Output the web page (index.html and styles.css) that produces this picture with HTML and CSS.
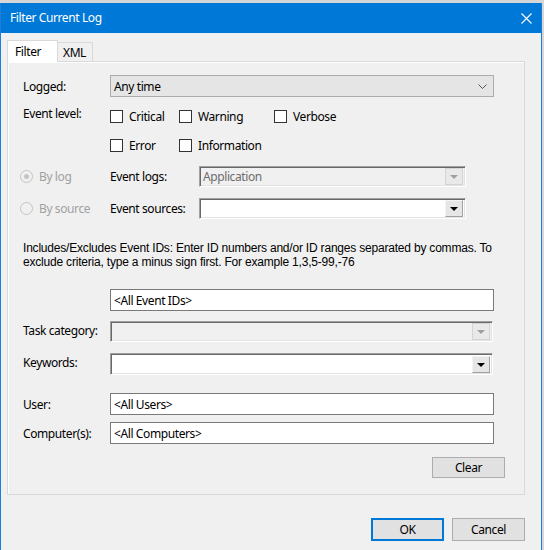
FILE: index.html
```html
<!DOCTYPE html>
<html>
<head>
    <title>Filter Current Log</title>
    <link rel="stylesheet" href="styles.css">
</head>
<body>
    <div class="window">
        <div class="titlebar">
            <span class="title">Filter Current Log</span>
            <svg class="close" width="11" height="11" viewBox="0 0 11 11">
                <path d="M0.5 0.5 L10.5 10.5 M10.5 0.5 L0.5 10.5" stroke="#fff" stroke-width="1.1" fill="none"/>
            </svg>
        </div>

        <div class="content">
            <div class="tabs">
                <div class="tab active">Filter</div>
                <div class="tab">XML</div>
            </div>

            <div class="panel">
                <div class="row row-logged">
                    <span class="lbl">Logged:</span>
                    <div class="select">
                        <span>Any time</span>
                        <svg class="chevron" width="9" height="5" viewBox="0 0 9 5">
                            <path d="M0.5 0.5 L4.5 4.5 L8.5 0.5" stroke="#555" stroke-width="1" fill="none"/>
                        </svg>
                    </div>
                </div>

                <div class="row row-check1">
                    <span class="lbl lbl-up">Event level:</span>
                    <label class="check w-critical"><span class="box"></span>Critical</label>
                    <label class="check w-warning"><span class="box"></span>Warning</label>
                    <label class="check"><span class="box"></span>Verbose</label>
                </div>
                <div class="row row-check2">
                    <span class="lbl"></span>
                    <label class="check w-critical"><span class="box"></span>Error</label>
                    <label class="check"><span class="box"></span>Information</label>
                </div>

                <div class="row row-logs">
                    <label class="radio disabled"><span class="dot checked"></span>By log</label>
                    <span class="lbl2">Event logs:</span>
                    <div class="combo combo-short disabled">
                        <span class="combo-text">Application</span>
                        <span class="drop"><span class="arrow"></span></span>
                    </div>
                </div>
                <div class="row row-sources">
                    <label class="radio disabled"><span class="dot"></span>By source</label>
                    <span class="lbl2">Event sources:</span>
                    <div class="combo combo-short">
                        <span class="combo-text"></span>
                        <span class="drop"><span class="arrow"></span></span>
                    </div>
                </div>

                <div class="note">
                    <div class="note-line">Includes/Excludes Event IDs: Enter ID numbers and/or ID ranges separated by commas. To</div>
                    <div class="note-line">exclude criteria, type a minus sign first. For example 1,3,5-99,-76</div>
                </div>

                <div class="row row-ids">
                    <span class="lbl"></span>
                    <div class="textbox">&lt;All Event IDs&gt;</div>
                </div>

                <div class="row row-task">
                    <span class="lbl lbl-up1">Task category:</span>
                    <div class="combo combo-long disabled">
                        <span class="combo-text"></span>
                        <span class="drop"><span class="arrow"></span></span>
                    </div>
                </div>
                <div class="row row-keywords">
                    <span class="lbl lbl-up1">Keywords:</span>
                    <div class="combo combo-long">
                        <span class="combo-text"></span>
                        <span class="drop"><span class="arrow"></span></span>
                    </div>
                </div>

                <div class="row row-user">
                    <span class="lbl">User:</span>
                    <div class="textbox">&lt;All Users&gt;</div>
                </div>
                <div class="row row-computer">
                    <span class="lbl">Computer(s):</span>
                    <div class="textbox">&lt;All Computers&gt;</div>
                </div>

                <div class="clear-row">
                    <button class="btn">Clear</button>
                </div>
            </div>

            <div class="actions">
                <button class="btn default">OK</button>
                <button class="btn">Cancel</button>
            </div>
        </div>
    </div>
</body>
</html>
```

FILE: styles.css
```css
* { margin: 0; padding: 0; box-sizing: border-box; }
body {
    background: #d6d6d6; font-family: "Noto Sans", Arial, sans-serif; font-size: 12px;
    letter-spacing: -0.4px; color: #000;
}

.window {
    width: 542px; height: 547px; margin-top: 3px;
    border-left: 1px solid #1a7fd8; border-right: 1px solid #1a7fd8;
    background: #f0f0f0;
}
.titlebar {
    height: 30px; background: #0078d7; color: #fff;
    display: flex; align-items: center; justify-content: space-between;
    padding: 0 9px 1px 9px;
}
.title { font-size: 12px; }
.close { margin-top: 1px; }

.content { padding: 7px 0 0 6px; }
.tabs { display: flex; align-items: flex-end; height: 21px; position: relative; z-index: 1; }
.tab {
    height: 19px; padding: 0 6px 0 5px; border: 1px solid #d9d9d9; border-bottom: none;
    background: #f0f0f0; display: flex; align-items: center; margin-left: -1px;
}
.tab:first-child { margin-left: 0; }
.tab.active { height: 22px; width: 51px; padding-left: 7px; background: #fff; margin-bottom: -1px; }

.panel {
    width: 518px; height: 434px; border: 1px solid #d9d9d9;
    background: #f0f0f0; box-shadow: inset 1px 1px 0 #fff;
    padding: 13px 0 0 15px;
}

.row { display: flex; align-items: center; }
.lbl { width: 87px; flex: none; }
.lbl2 { width: 89px; flex: none; }
.lbl-up { margin-bottom: 7px; }
.lbl-up1 { margin-bottom: 3px; }

.row-logged { height: 22px; }
.row-check1 { height: 19px; margin-top: 10px; }
.row-check2 { height: 19px; margin-top: 10px; }
.row-logs { height: 21px; margin-top: 11px; margin-left: -3px; }
.row-sources { height: 21px; margin-top: 11px; margin-left: -3px; }
.note {
    margin-top: 22px; white-space: nowrap;
    font-family: "Liberation Sans", Arial, sans-serif; letter-spacing: -0.2px;
}
.note-line { height: 14px; line-height: 14px; }
.row-ids { height: 22px; margin-top: 20px; }
.row-task { height: 21px; margin-top: 10px; }
.row-keywords { height: 22px; margin-top: 11px; }
.row-user { height: 22px; margin-top: 18px; }
.row-computer { height: 22px; margin-top: 7px; }

.select {
    width: 384px; height: 22px; background: #e5e5e5; border: 1px solid #acacac;
    display: flex; align-items: center; justify-content: space-between;
    padding: 0 6px 0 3px;
}

.check { display: flex; align-items: center; }
.w-critical { width: 69px; }
.w-warning { width: 95px; }
.box { width: 13px; height: 13px; border: 1px solid #333; background: #fff; margin-right: 6px; }

.radio { display: flex; align-items: center; width: 90px; flex: none; }
.radio.disabled { color: #a0a0a0; }
.dot {
    width: 13px; height: 13px; border-radius: 50%; border: 1px solid #c4c4c4;
    background: #f0f0f0; margin-right: 6px; position: relative;
}
.dot.checked::after {
    content: ""; position: absolute; left: 3px; top: 3px; width: 5px; height: 5px;
    border-radius: 50%; background: #c4c4c4;
}

.combo {
    height: 21px; background: #fff; display: flex; align-items: center; justify-content: space-between;
    border: 1px solid; border-color: #a0a0a0 #fff #fff #a0a0a0;
    box-shadow: inset 1px 1px 0 #696969, inset -1px -1px 0 #e3e3e3;
    padding: 2px;
}
.row-keywords .combo { height: 22px; }
.combo.disabled { background: #f0f0f0; color: #6d6d6d; }
.combo-short { width: 267px; }
.combo-long { width: 383px; }
.combo-text { padding-left: 1px; }
.drop {
    width: 18px; height: 17px; background: #e6e6e6;
    border: 1px solid; border-color: #f4f4f4 #a0a0a0 #a0a0a0 #f4f4f4;
    display: flex; align-items: center; justify-content: center;
}
.arrow {
    width: 0; height: 0; border-left: 4px solid transparent; border-right: 4px solid transparent;
    border-top: 4px solid #000; margin-top: 1px;
}
.combo.disabled .drop { border-color: #d4d4d4; background: #e9e9e9; }
.combo.disabled .arrow { border-top-color: #a0a0a0; }

.textbox {
    width: 384px; height: 22px; background: #fff; border: 1px solid #7a7a7a;
    display: flex; align-items: center; padding-left: 3px;
}

.clear-row { display: flex; justify-content: flex-end; padding-right: 19px; margin-top: 13px; }

.btn {
    height: 21px; width: 73px; background: #e1e1e1; border: 1px solid #adadad;
    font-family: "Noto Sans", Arial, sans-serif; font-size: 12px; letter-spacing: -0.4px; color: #000;
}
.actions { display: flex; justify-content: flex-end; gap: 8px; width: 518px; margin-top: 23px; }
.actions .btn { height: 23px; }
.btn.default { border: 2px solid #0078d7; }
```
